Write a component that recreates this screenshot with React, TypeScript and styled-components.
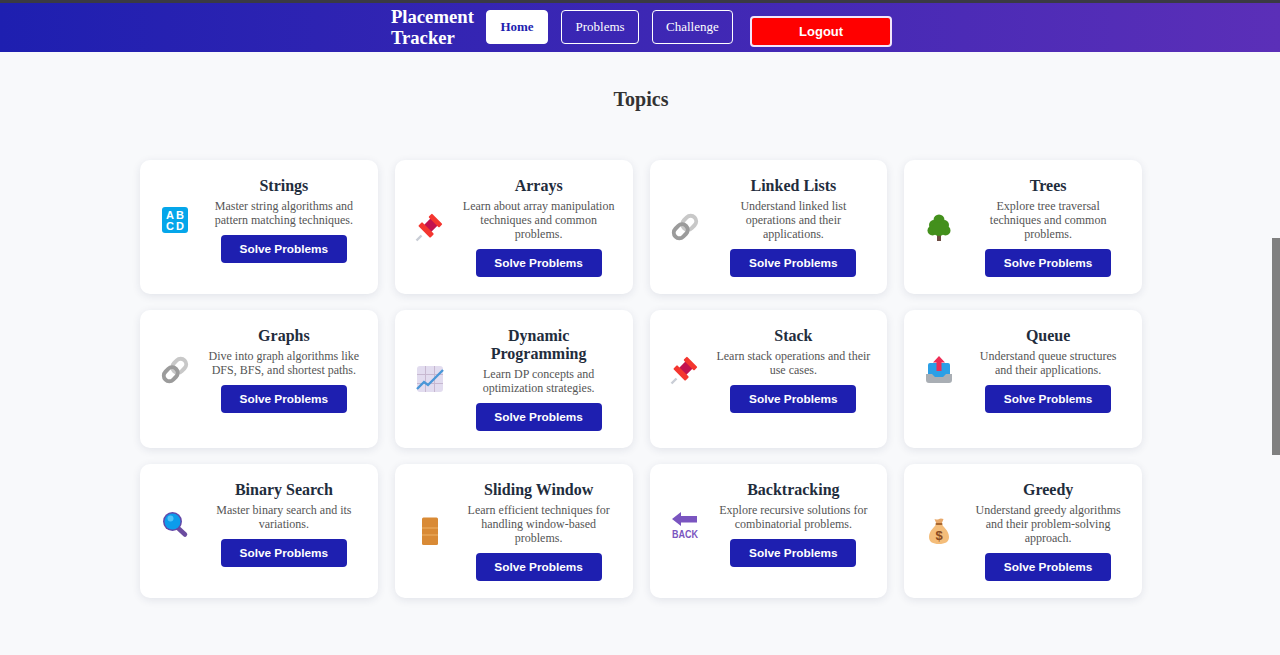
import React from 'react';
import styled, { createGlobalStyle } from 'styled-components';

const GlobalStyle = createGlobalStyle`
  html, body {
    margin: 0;
    height: 100%;
    overflow: hidden;
    background: #f8f9fb;
    font-family: "Liberation Serif", "Times New Roman", serif;
  }
  * { box-sizing: border-box; }
`;

const Page = styled.div`
  position: relative;
  height: 655px;
  overflow: hidden;
  border-top: 3px solid #3a3a44;
`;

const Navbar = styled.nav`
  height: 49px;
  padding: 0 0 1px 3px;
  display: flex;
  justify-content: center;
  align-items: center;
  background: linear-gradient(90deg, #1e1fb0 0%, #5b2fb8 100%);
`;

const Brand = styled.div`
  width: 95px;
  color: #fff;
  font-size: 18.7px;
  font-weight: 700;
  line-height: 21px;
`;

const NavLink = styled.a<{ $active?: boolean }>`
  height: 34px;
  margin-right: 13.4px;
  padding: 0 ${(p) => (p.$active ? '13.5px' : '13px')};
  display: flex;
  align-items: center;
  border: 1px solid #fff;
  border-radius: 4px;
  font-size: 13px;
  font-weight: ${(p) => (p.$active ? 700 : 400)};
  color: ${(p) => (p.$active ? '#1e1fb0' : '#fff')};
  background: ${(p) => (p.$active ? '#fff' : 'transparent')};
`;

const LogoutButton = styled.button`
  width: 142px;
  height: 31px;
  margin: 9px 0 0 4px;
  border: 2px solid #f1e6fa;
  border-radius: 4px;
  background: #ff0000;
  color: #fff;
  font-family: "Liberation Sans", Arial, sans-serif;
  font-size: 13px;
  font-weight: 700;
`;

const Main = styled.main`
  padding: 36px 0 0 2px;
`;

const Heading = styled.h1`
  margin: 0 0 49px;
  text-align: center;
  color: #333;
  font-size: 20px;
  line-height: 23px;
  font-weight: 700;
`;

const CardGrid = styled.div`
  width: 1002px;
  margin: 0 auto;
  display: grid;
  grid-template-columns: repeat(4, 1fr);
  gap: 16.6px 17px;
`;

const Card = styled.article`
  padding: 16.8px 16px;
  background: #fff;
  border-radius: 10px;
  box-shadow: 0 2px 8px rgba(30, 40, 80, 0.1);
`;

const CardRow = styled.div`
  display: flex;
  align-items: center;
  gap: 12px;
`;

const IconBox = styled.div`
  flex: 0 0 38px;
  display: flex;
  justify-content: center;
`;

const CardBody = styled.div`
  flex: 1;
  min-width: 0;
  display: flex;
  flex-direction: column;
  align-items: center;
  text-align: center;
`;

const CardTitle = styled.h2`
  margin: 0 0 4px;
  color: #1f2d3d;
  font-size: 16px;
  line-height: 18px;
  font-weight: 700;
`;

const CardText = styled.p`
  margin: 0 0 8px;
  color: #555;
  font-size: 12px;
  line-height: 14px;
`;

const SolveButton = styled.button`
  width: 126px;
  height: 28px;
  padding: 0;
  border: 0;
  border-radius: 4px;
  background: #1e1fb0;
  color: #fff;
  font-family: "Liberation Sans", Arial, sans-serif;
  font-size: 11.8px;
  font-weight: 700;
`;

const ScrollThumb = styled.div`
  position: absolute;
  right: 0;
  top: 235px;
  width: 8px;
  height: 217px;
  background: #808080;
`;

const Icon = styled.svg`
  display: block;
  width: 28px;
  height: 28px;
  overflow: visible;
`;

const AbcIcon = () => (
  <Icon viewBox="0 0 28 28">
    <rect x="1" y="1" width="26" height="26" rx="3" fill="#05a6ea" />
    <g fill="#fff" fontFamily="Liberation Sans, sans-serif" fontWeight="700" fontSize="11" textAnchor="middle">
      <text x="9" y="12.5">A</text>
      <text x="19" y="12.5">B</text>
      <text x="9" y="23.5">C</text>
      <text x="19" y="23.5">D</text>
    </g>
  </Icon>
);

const PinIcon = () => (
  <Icon viewBox="0 0 28 28">
    <path d="M5.500 22.500L0.500 27.500" stroke="#c9cdd6" strokeWidth="2.400" />
    <g transform="rotate(45 14.500 12.500)">
      <rect x="9.500" y="6" width="10" height="11" fill="#c2124f" />
      <rect x="7" y="3" width="15" height="5" rx="1" fill="#f4362f" />
      <rect x="6" y="16" width="17" height="5.500" rx="1" fill="#f4362f" />
    </g>
  </Icon>
);

const LinkIcon = () => (
  <Icon viewBox="0 0 28 28">
    <g fill="none" strokeWidth="4" transform="rotate(-45 14 14)">
      <rect x="12.500" y="8.500" width="15" height="11" rx="5.500" stroke="#c8c8c8" />
      <rect x="0.500" y="8.500" width="15" height="11" rx="5.500" stroke="#9b9b9b" />
    </g>
  </Icon>
);

const TreeIcon = () => (
  <Icon viewBox="0 0 28 28">
    <rect x="12" y="20" width="4" height="8" fill="#6d4c41" />
    <g fill="#43901c">
      <circle cx="14" cy="7" r="5.500" />
      <circle cx="9" cy="12" r="5" />
      <circle cx="19" cy="12" r="5" />
      <circle cx="7.500" cy="17.500" r="5" />
      <circle cx="20.500" cy="17.500" r="5" />
      <circle cx="14" cy="16" r="7" />
    </g>
  </Icon>
);

const ChartIcon = () => (
  <Icon viewBox="0 0 28 28">
    <rect x="1" y="1" width="26" height="26" rx="3" fill="#e2dcef" />
    <path d="M9.500 1v26M18.500 1v26M1 9.500h26M1 18.500h26" stroke="#c7b8d0" strokeWidth="1" />
    <path d="M1 24l7-7 4 3L27 5" fill="none" stroke="#4a97d8" strokeWidth="2.400" />
  </Icon>
);

const InboxIcon = () => (
  <Icon viewBox="0 0 28 28">
    <path d="M3 9a2 2 0 0 1 2-2h18a2 2 0 0 1 2 2v12H3z" fill="#2b9fe6" />
    <path d="M1 18h6l3 3h8l3-3h6v6a3 3 0 0 1-3 3H4a3 3 0 0 1-3-3z" fill="#a9aeb4" />
    <path d="M14 0l6 6.500h-3.500V15h-5V6.500H8z" fill="#ee2d55" />
  </Icon>
);

const SearchIcon = () => (
  <Icon viewBox="0 0 28 28">
    <path d="M17 18l7 6.500" stroke="#6b4c9f" strokeWidth="4.500" strokeLinecap="round" />
    <circle cx="11.500" cy="11.500" r="9.500" fill="#6247a8" />
    <circle cx="11.500" cy="11.500" r="8" fill="#0c9cec" />
    <circle cx="9.500" cy="8.500" r="3" fill="#4fc3f7" />
  </Icon>
);

const BrickIcon = () => (
  <Icon viewBox="0 0 28 28">
    <rect x="6" y="0.500" width="16" height="27.500" rx="1.500" fill="#d98a35" />
    <path d="M6 11h16M6 18h16" stroke="#f0b266" strokeWidth="1.200" />
  </Icon>
);

const BackIcon = () => (
  <Icon viewBox="0 0 28 28">
    <path d="M1 9l9-7v4h16v6.500H10V16z" fill="#7a55c0" />
    <text x="14" y="27.500" fill="#7a55c0" fontFamily="Liberation Sans, sans-serif" fontSize="11.500" fontWeight="700" textAnchor="middle" textLength="26" lengthAdjust="spacingAndGlyphs">BACK</text>
  </Icon>
);

const BagIcon = () => (
  <Icon viewBox="0 0 28 28">
    <path d="M9.500 2c2 .5 3 1 4.500 0s3-.5 4.500 0l-2 5h-5z" fill="#e8a869" />
    <path d="M11 7h6c1 3 7 6.500 7 13 0 5-4 7-10 7S4 25 4 20c0-6.500 6-10 7-13z" fill="#f4bd7a" />
    <rect x="10.500" y="6" width="7" height="2" rx="1" fill="#a8662e" />
    <text x="14" y="23" fill="#8a4b21" fontFamily="Liberation Sans, sans-serif" fontSize="13" fontWeight="700" textAnchor="middle">$</text>
  </Icon>
);

const topics = [
  { title: 'Strings', text: 'Master string algorithms and pattern matching techniques.', icon: <AbcIcon /> },
  { title: 'Arrays', text: 'Learn about array manipulation techniques and common problems.', icon: <PinIcon /> },
  { title: 'Linked Lists', text: 'Understand linked list operations and their applications.', icon: <LinkIcon /> },
  { title: 'Trees', text: 'Explore tree traversal techniques and common problems.', icon: <TreeIcon /> },
  { title: 'Graphs', text: 'Dive into graph algorithms like DFS, BFS, and shortest paths.', icon: <LinkIcon /> },
  { title: 'Dynamic Programming', text: 'Learn DP concepts and optimization strategies.', icon: <ChartIcon /> },
  { title: 'Stack', text: 'Learn stack operations and their use cases.', icon: <PinIcon /> },
  { title: 'Queue', text: 'Understand queue structures and their applications.', icon: <InboxIcon /> },
  { title: 'Binary Search', text: 'Master binary search and its variations.', icon: <SearchIcon /> },
  { title: 'Sliding Window', text: 'Learn efficient techniques for handling window-based problems.', icon: <BrickIcon /> },
  { title: 'Backtracking', text: 'Explore recursive solutions for combinatorial problems.', icon: <BackIcon /> },
  { title: 'Greedy', text: 'Understand greedy algorithms and their problem-solving approach.', icon: <BagIcon /> },
];

const App = () => (
  <Page>
    <GlobalStyle />
    <Navbar>
      <Brand>Placement Tracker</Brand>
      <NavLink $active>Home</NavLink>
      <NavLink>Problems</NavLink>
      <NavLink>Challenge</NavLink>
      <LogoutButton>Logout</LogoutButton>
    </Navbar>
    <Main>
      <Heading>Topics</Heading>
      <CardGrid>
        {topics.map((t) => (
          <Card key={t.title}>
            <CardRow>
              <IconBox>{t.icon}</IconBox>
              <CardBody>
                <CardTitle>{t.title}</CardTitle>
                <CardText>{t.text}</CardText>
                <SolveButton>Solve Problems</SolveButton>
              </CardBody>
            </CardRow>
          </Card>
        ))}
      </CardGrid>
    </Main>
    <ScrollThumb />
  </Page>
);

export default App;
